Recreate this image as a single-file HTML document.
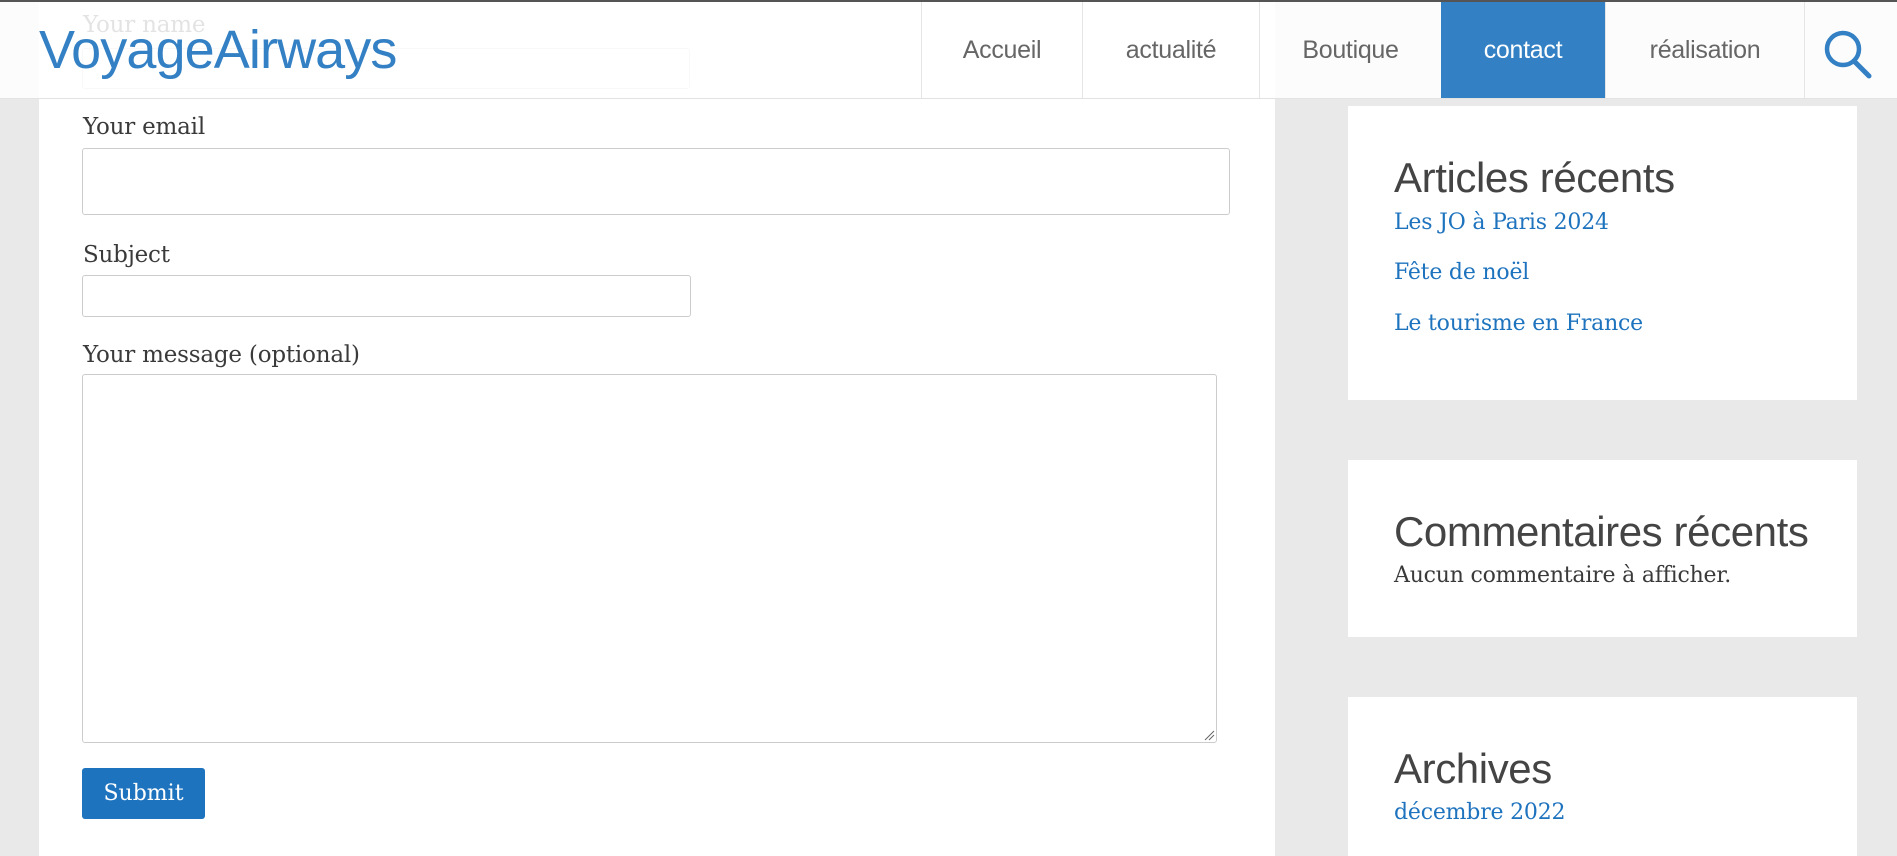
<!DOCTYPE html>
<html><head><meta charset="utf-8"><style>
*{margin:0;padding:0;box-sizing:border-box}
body{width:1897px;height:856px;overflow:hidden;background:#e9e9e9;position:relative;font-family:"DejaVu Serif",serif;color:#3a3a3a}
.abs{position:absolute}
.main{left:39px;top:0;width:1236px;height:856px;background:#fff}
label{position:absolute;left:83px;font-size:23px;line-height:1;color:#3a3a3a;white-space:nowrap;letter-spacing:-0.2px}
.inp{position:absolute;border:1px solid #ccc;border-radius:3px;background:#fff}
.btn{left:82px;top:768px;width:123px;height:51px;background:#1e73be;border-radius:3px;color:#fff;font-size:22px;text-align:center;line-height:51px}
.w{position:absolute;left:1348px;width:509px;background:#fff}
.w h2{position:absolute;left:46px;font-family:"Liberation Sans",sans-serif;font-weight:normal;font-size:42px;color:#444;white-space:nowrap;line-height:1;letter-spacing:-0.4px}
.w a,.w p{position:absolute;left:46px;font-size:22px;color:#1e73be;white-space:nowrap;line-height:1;text-decoration:none;letter-spacing:-0.2px}
.w p{color:#3a3a3a}
.hdr{left:0;top:0;width:1897px;height:99px;background:rgba(255,255,255,0.86);border-top:2px solid #555;border-bottom:1px solid #e2e2e2}
.logo{left:39px;top:23px;font-family:"Liberation Sans",sans-serif;font-size:54px;color:#3380c4;letter-spacing:-0.9px;line-height:1}
.nav{top:2px;height:96px;border-left:1px solid #e5e5e5;font-family:"Liberation Sans",sans-serif;font-size:25px;color:#666;text-align:center;line-height:96px;letter-spacing:-0.3px}
</style></head><body>
<div class="abs main"></div>
<label style="top:14px;color:#3a3a3a">Your name</label>
<div class="inp" style="left:82px;top:48px;width:608px;height:41px"></div>
<label style="top:116px">Your email</label>
<div class="inp" style="left:82px;top:148px;width:1148px;height:67px"></div>
<label style="top:244px">Subject</label>
<div class="inp" style="left:82px;top:275px;width:609px;height:42px"></div>
<label style="top:344px">Your message (optional)</label>
<div class="inp" style="left:82px;top:374px;width:1135px;height:369px"></div>
<svg class="abs" style="left:1203px;top:729px" width="12" height="12"><path d="M2 11L11 2M6 11L11 6" stroke="#666" stroke-width="1"/></svg>
<div class="abs btn">Submit</div>

<div class="w" style="top:106px;height:294px">
<h2 style="top:51px">Articles récents</h2>
<a style="top:106px">Les JO à Paris 2024</a>
<a style="top:156px">Fête de noël</a>
<a style="top:207px">Le tourisme en France</a>
</div>
<div class="w" style="top:460px;height:177px">
<h2 style="top:51px">Commentaires récents</h2>
<p style="top:105px">Aucun commentaire à afficher.</p>
</div>
<div class="w" style="top:697px;height:159px">
<h2 style="top:51px">Archives</h2>
<a style="top:105px">décembre 2022</a>
</div>

<div class="abs hdr"></div>
<div class="abs logo">VoyageAirways</div>
<div class="abs nav" style="left:921px;width:161px">Accueil</div>
<div class="abs nav" style="left:1082px;width:177px">actualité</div>
<div class="abs nav" style="left:1259px;width:182px">Boutique</div>
<div class="abs nav" style="left:1441px;width:164px;background:#3380c4;color:#fff;border-left:none">contact</div>
<div class="abs nav" style="left:1605px;width:199px">réalisation</div>
<div class="abs nav" style="left:1804px;width:93px"></div>
<svg class="abs" style="left:1822px;top:28px" width="54" height="52" viewBox="0 0 54 52"><circle cx="21" cy="21" r="16" fill="none" stroke="#3380c4" stroke-width="4.5"/><path d="M32 33L47 48" stroke="#3380c4" stroke-width="5" stroke-linecap="round"/></svg>
</body></html>
